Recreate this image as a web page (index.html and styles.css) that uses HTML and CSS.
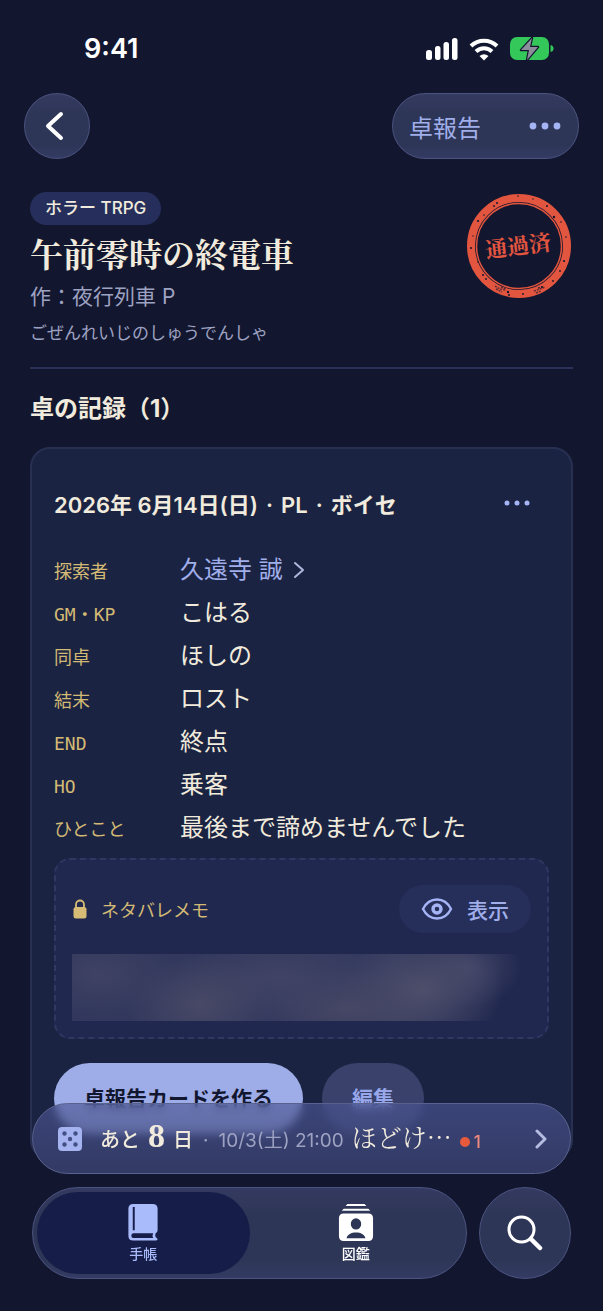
FILE: index.html
```html
<!DOCTYPE html>
<html lang="ja">
<head>
<meta charset="utf-8">
<meta name="viewport" content="width=device-width, initial-scale=1">
<title>午前零時の終電車</title>
<link rel="stylesheet" href="styles.css">
</head>
<body>
<div class="status">
  <span class="status-time">9:41</span>
  <div class="status-icons">
    <svg width="32" height="24" viewBox="0 0 32 24" fill="#fff" aria-hidden="true"><rect x="0" y="13" width="6" height="10" rx="2.500"/><rect x="9" y="9" width="5.500" height="14" rx="2.500"/><rect x="17.500" y="5" width="5.500" height="18" rx="2.500"/><rect x="26" y="1" width="5.500" height="22" rx="2.500"/></svg>
    <svg width="30" height="24" viewBox="0 0 30 24" aria-hidden="true"><g fill="none" stroke="#fff" stroke-width="4"><path d="M2 9a18.500 18.500 0 0 1 26 0"/><path d="M7 14.500a11.500 11.500 0 0 1 16 0"/></g><path d="M15 23.500l-4.500-4.500q4.500-3.600 9 0z" fill="#fff"/></svg>
    <svg width="44" height="24" viewBox="0 0 44 24" aria-hidden="true"><rect x="0" y="0" width="39" height="23" rx="7" fill="#34c759"/><path d="M40.500 8q3 .5 3 3.500t-3 3.500z" fill="#34c759"/><path d="M22 1L11 13h8l-2 10 11-13h-8z" fill="#8c8f9b" stroke="#12172f" stroke-width="2.400" stroke-linejoin="round" paint-order="stroke"/></svg>
  </div>
</div>

<header class="nav">
  <button class="glass back" type="button" aria-label="戻る">
    <svg width="20" height="32" viewBox="0 0 20 32" fill="none" stroke="#fff" stroke-width="4" stroke-linecap="round" stroke-linejoin="round" aria-hidden="true"><path d="M17 4L4 16l13 12"/></svg>
  </button>
  <div class="glass nav-actions">
    <button class="nav-report" type="button">卓報告</button>
    <button class="dots" type="button" aria-label="メニュー"><svg width="32" height="8" viewBox="0 0 32 8" fill="#a5b4f4" aria-hidden="true"><circle cx="4" cy="4" r="3.400"/><circle cx="16" cy="4" r="3.400"/><circle cx="28" cy="4" r="3.400"/></svg></button>
  </div>
</header>

<main class="page">
  <section class="scenario">
    <div class="scenario-info">
      <span class="tag">ホラー TRPG</span>
      <h1 class="title">午前零時の終電車</h1>
      <p class="author">作：夜行列車 P</p>
      <p class="reading">ごぜんれいじのしゅうでんしゃ</p>
    </div>
    <svg class="stamp" width="106" height="106" viewBox="0 0 106 106" role="img" aria-label="通過済">
      <circle cx="52" cy="54" r="48" fill="none" stroke="#e2553f" stroke-width="8"/>
      <circle cx="52" cy="54" r="42.500" fill="none" stroke="#e2553f" stroke-width="1.500"/>
      <g fill="#12172f"><circle cx="30" cy="11" r="1"/><circle cx="27" cy="14" r=".9"/><circle cx="51" cy="4" r=".8"/><circle cx="66" cy="7" r=".7"/><circle cx="80" cy="14" r="1"/><circle cx="87" cy="25" r="1.200"/><circle cx="94" cy="30" r=".8"/><circle cx="99" cy="45" r=".8"/><circle cx="97" cy="69" r="1.100"/><circle cx="93" cy="79" r=".9"/><circle cx="86" cy="89" r=".9"/><circle cx="75" cy="95" r="1"/><circle cx="56" cy="102" r=".9"/><circle cx="41" cy="100" r="1.200"/><circle cx="42" cy="103" r="1"/><circle cx="16" cy="83" r="1"/><circle cx="19" cy="87" r=".9"/><circle cx="11" cy="70" r=".8"/><circle cx="4" cy="56" r="1"/><circle cx="6" cy="44" r=".7"/><circle cx="11" cy="29" r="1.100"/><circle cx="17" cy="23" r=".8"/></g>
      <path d="M28 94l5 3 5 1M29 97l6 3M67 99l6-2 5-2M69 101l5-2M34 95l5 2M71 96l4-1" stroke="#12172f" stroke-width="1.400" stroke-dasharray="2 1" opacity=".65" fill="none"/>
      <text class="stamp-text" x="51" y="62" text-anchor="middle" transform="rotate(-7 51 54)">通過済</text>
    </svg>
  </section>

  <h2 class="section-title">卓の記録（1）</h2>

  <article class="card">
    <div class="card-head">
      <h3 class="card-title"><span>2026年 6月14日(日)</span><span>·</span><span>PL</span><span>·</span><span>ボイセ</span></h3>
      <button class="dots" type="button" aria-label="記録のメニュー"><svg width="26" height="6" viewBox="0 0 26 6" fill="#a5b4f4" aria-hidden="true"><circle cx="3" cy="3" r="2.500"/><circle cx="13" cy="3" r="2.500"/><circle cx="23" cy="3" r="2.500"/></svg></button>
    </div>
    <dl class="facts">
      <dt>探索者</dt><dd><a class="person" href="#pc">久遠寺 誠<svg width="12" height="18" viewBox="0 0 12 18" fill="none" stroke="#b0b7dc" stroke-width="2" stroke-linecap="round" stroke-linejoin="round" aria-hidden="true"><path d="M2 2l8 7-8 7"/></svg></a></dd>
      <dt>GM・KP</dt><dd>こはる</dd>
      <dt>同卓</dt><dd>ほしの</dd>
      <dt>結末</dt><dd>ロスト</dd>
      <dt>END</dt><dd>終点</dd>
      <dt>HO</dt><dd>乗客</dd>
      <dt>ひとこと</dt><dd>最後まで諦めませんでした</dd>
    </dl>
    <section class="memo">
      <div class="memo-head">
        <span class="memo-label"><svg width="16" height="20" viewBox="0 0 16 20" aria-hidden="true"><path d="M4 9V5.500a4 4 0 0 1 8 0V9" fill="none" stroke="#d6bc74" stroke-width="1.800"/><rect x="1.500" y="8" width="13" height="11.500" rx="2.500" fill="#d6bc74"/></svg>ネタバレメモ</span>
        <button class="reveal" type="button"><svg width="32" height="22" viewBox="0 0 32 22" fill="none" stroke="#a5b4f4" aria-hidden="true"><path d="M2 11C5 5 10 1.500 16 1.500S27 5 30 11c-3 6-8 9.500-14 9.500S5 17 2 11z" stroke-width="2.400"/><circle cx="16" cy="11" r="4" stroke-width="3.400"/></svg>表示</button>
      </div>
      <div class="veil" aria-hidden="true"></div>
    </section>
    <div class="card-actions">
      <button class="btn btn-primary" type="button">卓報告カードを作る</button>
      <button class="btn btn-quiet" type="button">編集</button>
    </div>
  </article>
</main>

<footer class="dock">
  <a class="glass next" href="#next">
    <svg class="die" width="24" height="24" viewBox="0 0 24 24" aria-hidden="true"><rect width="24" height="24" rx="4" fill="#a5b4f0"/><g fill="#444f86"><circle cx="6.500" cy="6.500" r="2.200"/><circle cx="17.500" cy="6.500" r="2.200"/><circle cx="12" cy="12" r="2.200"/><circle cx="6.500" cy="17.500" r="2.200"/><circle cx="17.500" cy="17.500" r="2.200"/></g></svg>
    <span class="next-text">
      <span class="left">あと</span>
      <b class="count">8</b>
      <span class="left">日</span>
      <span class="muted sep">·</span>
      <span class="muted">10/3(土) 21:00</span>
      <span class="next-title">ほどけ…</span>
      <span class="alert">1</span>
    </span>
    <svg width="12" height="20" viewBox="0 0 12 20" fill="none" stroke="#b4bce0" stroke-width="3" stroke-linecap="round" stroke-linejoin="round" aria-hidden="true"><path d="M2 2l8 8-8 8"/></svg>
  </a>
  <div class="dock-row">
    <nav class="glass tabs">
      <a class="tab tab-on" href="#notes"><svg width="30" height="37" viewBox="0 0 30 38" aria-hidden="true"><path fill="#a9bbfb" fill-rule="evenodd" d="M5 0h20q5 0 5 5v22q0 2-2 3-1 2 0 4l2 2q0 1.500-1.500 1.500H5q-5 0-5-5V5q0-5 5-5zM4.500 3v24h2V3zM5 30q-2 .3-2 2.500T5 35h20.500q-1.500-2.500 0-5z"/></svg>手帳</a>
      <a class="tab" href="#zukan"><svg width="36" height="37" viewBox="0 0 38 39" fill="#fff" aria-hidden="true"><path d="M10 0h18l2 2H8zM6 5h26l2 2H4z"/><path fill-rule="evenodd" d="M6 10h26q5 0 5 5v19q0 5-5 5H6q-5 0-5-5V15q0-5 5-5zM19 15a5.500 6 0 0 0 0 12 5.500 6 0 0 0 0-12zM9 36h20c-1-4-5-6-10-6s-9 2-10 6z"/></svg>図鑑</a>
    </nav>
    <button class="glass search" type="button" aria-label="検索"><svg width="36" height="36" viewBox="0 0 36 36" fill="none" stroke="#fff" stroke-linecap="round" aria-hidden="true"><circle cx="14.500" cy="14.500" r="12.500" stroke-width="3"/><path d="M24 24l9 9" stroke-width="4.500"/></svg></button>
  </div>
</footer>
</body>
</html>
```

FILE: styles.css
```css
:root {
  --bg: #12172f;
  --card: #1b2342;
  --line: #2a3156;
  --cream: #f1ebdd;
  --accent: #a0aeea;
  --gold: #d3ba74;
  --muted: #9ea2c2;
  --sans: Inter, "Noto Sans CJK JP", sans-serif;
  --serif: "Noto Serif CJK JP", "Noto Serif JP", "Liberation Serif", "Noto Sans CJK JP", serif;
}

* { box-sizing: border-box; }

body {
  margin: 0;
  background: var(--bg);
  color: var(--cream);
  font-family: var(--sans);
}

button {
  border: 0;
  padding: 0;
  background: none;
  color: inherit;
  font: inherit;
}

a { color: inherit; text-decoration: none; }
svg { display: block; flex: none; }
h1, h2, h3, p, dl, dd { margin: 0; }

.status {
  display: flex;
  align-items: center;
  justify-content: space-between;
  height: 93px;
  padding: 4px 49px 0 84px;
  color: #fff;
}
.status-time { font-size: 27px; font-weight: 600; }
.status-icons { display: flex; align-items: center; gap: 11px; }

.glass {
  background: linear-gradient(#343a60, #2e3657 30%, #2e3657 80%, #333b63);
  border: 1px solid #4b5380;
  border-radius: 48px;
}

.nav {
  display: flex;
  justify-content: space-between;
  padding: 0 24px;
}
.back {
  display: grid;
  place-items: center;
  width: 66px;
  height: 66px;
  padding-right: 6px;
}
.nav-actions {
  display: flex;
  align-items: center;
  gap: 48px;
  height: 66px;
  padding: 0 17px 0 16px;
  color: var(--accent);
}
.nav-report { font-size: 24px; }

.page { padding: 33px 30px 140px; }

.scenario {
  display: flex;
  justify-content: space-between;
  align-items: flex-start;
  padding-bottom: 22px;
  border-bottom: 2px solid var(--line);
}
.scenario-info { display: flex; flex-direction: column; align-items: flex-start; }
.tag {
  padding: 0 15px;
  border-radius: 17px;
  background: #262f5c;
  font-size: 17px;
  font-weight: 500;
  line-height: 33px;
}
.title {
  margin-top: 6px;
  font-family: var(--serif);
  font-size: 33px;
  font-weight: 700;
  line-height: 44px;
}
.author { margin-top: 7px; color: var(--muted); font-size: 21px; line-height: 30px; }
.reading { margin-top: 9px; color: var(--muted); font-size: 17px; line-height: 24px; }
.stamp-text {
  fill: #e2553f;
  font-family: var(--serif);
  font-size: 22px;
  font-weight: 700;
}

.section-title {
  margin: 22px 0 20px;
  font-size: 24px;
  font-weight: 700;
  line-height: 36px;
}

.card {
  padding: 24px 22px;
  border: 2px solid #283052;
  border-radius: 20px;
  background: var(--card);
}
.card-head {
  display: flex;
  align-items: center;
  justify-content: space-between;
  height: 60px;
  padding-right: 19px;
}
.card-title {
  display: flex;
  align-items: baseline;
  gap: 8px;
  font-size: 22px;
  font-weight: 600;
}

.facts {
  display: grid;
  grid-template-columns: 126px 1fr;
  row-gap: 7px;
  align-items: center;
  margin-top: 19px;
}
.facts dt {
  padding-top: 4px;
  color: var(--gold);
  font-family: "DejaVu Sans Mono", "Noto Sans CJK JP", monospace;
  font-size: 18px;
  line-height: 32px;
}
.facts dd { font-size: 24px; line-height: 36px; }
.person { display: flex; align-items: center; gap: 10px; color: var(--accent); }

.memo {
  margin-top: 12px;
  padding: 25px 16px 16px;
  border: 2px dashed #2f3762;
  border-radius: 16px;
  background: #21284f;
}
.memo-head { display: flex; align-items: center; justify-content: space-between; }
.memo-label {
  display: flex;
  align-items: center;
  gap: 13px;
  color: var(--gold);
  font-size: 18px;
}
.reveal {
  display: flex;
  align-items: center;
  gap: 14px;
  height: 48px;
  padding: 0 22px;
  border-radius: 24px;
  background: #262e5a;
  color: var(--accent);
  font-size: 21px;
  font-weight: 500;
}
.veil {
  height: 67px;
  margin-top: 21px;
  background:
    radial-gradient(ellipse 16% 60% at 6% 30%, #3f4263, #3f426300),
    radial-gradient(ellipse 16% 70% at 28% 75%, #484966, #48496600),
    radial-gradient(ellipse 22% 60% at 45% 35%, #404364, #40436400),
    radial-gradient(ellipse 20% 60% at 60% 80%, #474765, #47476500),
    radial-gradient(ellipse 18% 85% at 76% 55%, #4e4f6b, #4e4f6b00),
    radial-gradient(ellipse 12% 60% at 86% 20%, #434668, #43466800),
    linear-gradient(100deg, #32385d, #343a5f 70%, #21284f 92%);
}

.card-actions { display: flex; gap: 19px; margin-top: 24px; }
.btn {
  height: 71px;
  padding: 0 30px 4px;
  border-radius: 36px;
  font-size: 21px;
  font-weight: 700;
}
.btn-primary { background: #9eade8; color: var(--bg); }
.btn-quiet { background: #3a426c; color: #97a7ea; }

.dock {
  position: fixed;
  right: 0;
  bottom: 32px;
  left: 0;
  padding: 0 32px;
}
.next {
  display: flex;
  align-items: center;
  height: 71px;
  padding: 0 23px 0 25px;
  border-color: #59628f;
  background: linear-gradient(#4c5694a6, #434c82b3 50%, #343c67f5);
  backdrop-filter: blur(5px);
}
.next-text {
  display: flex;
  flex: 1;
  align-items: baseline;
  gap: 8px;
  min-width: 0;
  padding: 0 0 5px 18px;
  white-space: nowrap;
}
.left { font-size: 20px; font-weight: 500; }
.count { font-family: "Liberation Serif", serif; font-size: 34px; font-weight: 700; line-height: 40px; }
.muted { color: var(--muted); font-size: 19px; }
.sep { padding: 0 2px; }
.next-title { font-family: var(--serif); font-size: 25px; line-height: 40px; }
.alert {
  display: flex;
  align-items: center;
  gap: 4px;
  color: #ef8a7c;
  font-size: 17px;
  font-weight: 500;
}
.alert::before {
  width: 10px;
  height: 10px;
  border-radius: 50%;
  background: #e85a3c;
  content: "";
}

.dock-row { display: flex; gap: 12px; margin-top: 13px; }
.tabs {
  display: grid;
  flex: 1;
  grid-template-columns: 1fr 1fr;
  height: 92px;
  padding: 4px;
}
.tab {
  display: flex;
  flex-direction: column;
  align-items: center;
  justify-content: center;
  gap: 3px;
  padding-top: 2px;
  border-radius: 42px;
  color: #fff;
  font-size: 14px;
  font-weight: 500;
  line-height: 20px;
}
.tab-on { background: #151d48; color: #a9bbfb; }
.search { display: grid; place-items: center; width: 92px; height: 92px; }
```
